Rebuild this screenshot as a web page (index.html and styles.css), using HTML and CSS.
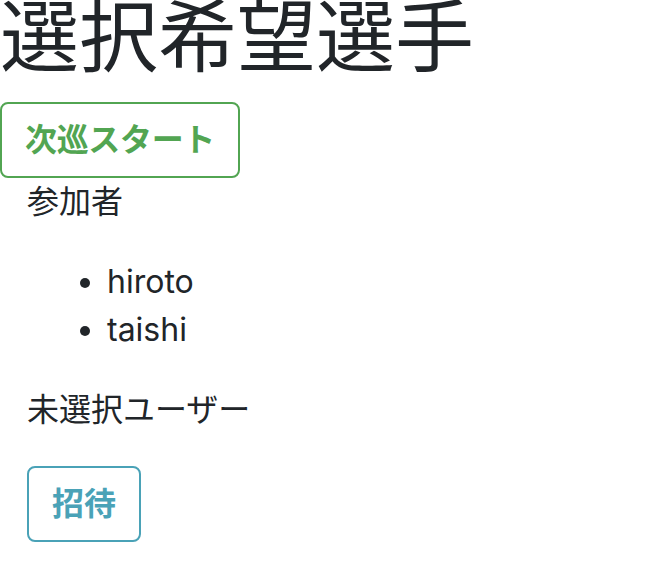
FILE: index.html
```html
<!DOCTYPE html>
<html lang="ja">
<head>
<meta charset="utf-8">
<title>選択希望選手</title>
<link rel="stylesheet" href="styles.css">
</head>
<body>
<h1 class="title">選択希望選手</h1>
<button class="btn btn-success">次巡スタート</button>
<div class="content">
  <p class="label">参加者</p>
  <ul class="members">
    <li>hiroto</li>
    <li>taishi</li>
  </ul>
  <p class="label">未選択ユーザー</p>
  <button class="btn btn-info">招待</button>
</div>
</body>
</html>
```

FILE: styles.css
```css
html, body {
  margin: 0;
  padding: 0;
  background: #fff;
}
body {
  font-family: Inter, "Noto Sans CJK JP", sans-serif;
  font-size: 32px;
  line-height: 1.5;
  color: #212529;
}
.title {
  margin: 0 0 26px 0;
  font-size: 79px;
  line-height: 74px;
  height: 76px;
  font-weight: 400;
}
.btn {
  display: block;
  background: #fff;
  font-family: Inter, "Noto Sans CJK JP", sans-serif;
  font-size: 32px;
  line-height: 48px;
  font-weight: 700;
  padding: 12px 23px;
  border-radius: 8px;
  border: 2px solid;
}
.btn-success {
  color: #52a552;
  border-color: #52a552;
  letter-spacing: -0.33px;
}
.btn-info {
  color: #4aa2b7;
  border-color: #4aa2b7;
}
.content {
  padding: 0 27px;
}
.label {
  margin: 0 0 32px 0;
}
.members {
  margin: 0 0 32px 0;
  padding-left: 80px;
}
```
